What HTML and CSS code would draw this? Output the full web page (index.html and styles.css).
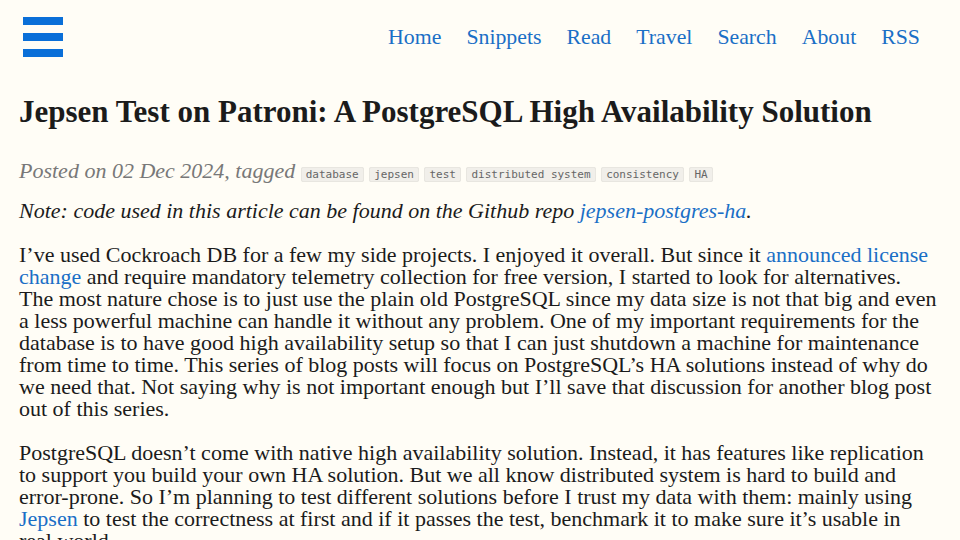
FILE: index.html
```html
<!DOCTYPE html>
<html lang="en">
<head>
  <meta charset="UTF-8">
  <meta name="viewport" content="width=device-width, initial-scale=1.0">
  <title>Jepsen Test on Patroni: A PostgreSQL High Availability Solution</title>
  <link rel="stylesheet" href="styles.css">
</head>
<body>
  <header class="header">
    <a class="menu" href="#" aria-label="Menu">
      <span></span><span></span><span></span>
    </a>
    <nav class="nav">
      <a href="/">Home</a>
      <a href="/snippets">Snippets</a>
      <a href="/read">Read</a>
      <a href="/travel">Travel</a>
      <a href="/search">Search</a>
      <a href="/about">About</a>
      <a href="/rss.xml">RSS</a>
    </nav>
  </header>

  <main class="post">
    <h1>Jepsen Test on Patroni: A PostgreSQL High Availability Solution</h1>
    <p class="meta">Posted on 02 Dec 2024, tagged
      <code>database</code>
      <code>jepsen</code>
      <code>test</code>
      <code>distributed system</code>
      <code>consistency</code>
      <code>HA</code>
    </p>

    <p><em>Note: code used in this article can be found on the Github repo <a href="#">jepsen-postgres-ha</a>.</em></p>

    <p>I’ve used Cockroach DB for a few my side projects. I enjoyed it overall. But since it <a href="#">announced license change</a> and require mandatory telemetry collection for free version, I started to look for alternatives. The most nature chose is to just use the plain old PostgreSQL since my data size is not that big and even a less powerful machine can handle it without any problem. One of my important requirements for the database is to have good high availability setup so that I can just shutdown a machine for maintenance from time to time. This series of blog posts will focus on PostgreSQL’s HA solutions instead of why do we need that. Not saying why is not important enough but I’ll save that discussion for another blog post out of this series.</p>

    <p>PostgreSQL doesn’t come with native high availability solution. Instead, it has features like replication to support you build your own HA solution. But we all know distributed system is hard to build and error-prone. So I’m planning to test different solutions before I trust my data with them: mainly using <a href="#">Jepsen</a> to test the correctness at first and if it passes the test, benchmark it to make sure it’s usable in real world.</p>
  </main>
</body>
</html>
```

FILE: styles.css
```css
body {
  margin: 0;
  background: #fffdf6;
  color: #1b1b1b;
  font-family: "Liberation Serif", Georgia, serif;
  font-size: 22px;
  line-height: 22px;
}
a {
  color: #1a6fc6;
  text-decoration: none;
}

.header {
  display: flex;
  justify-content: space-between;
  align-items: center;
  padding: 17px 40px 0 23px;
}
.menu {
  display: flex;
  flex-direction: column;
  gap: 8px;
  width: 40px;
}
.menu span {
  display: block;
  height: 8px;
  background: #0a6fd8;
}
.nav {
  display: flex;
  gap: 25px;
  font-size: 21.8px;
}

.post {
  padding: 0 22.5px 0 19px;
}
.post h1 {
  font-size: 31px;
  line-height: 36px;
  margin: 37px 0 30px;
}
.post p {
  margin: 0 0 22px;
}
.post .meta {
  color: #787878;
  font-style: italic;
  margin-bottom: 18px;
}
.meta code {
  font-family: "DejaVu Sans Mono", monospace;
  font-style: normal;
  font-size: 11px;
  line-height: 13px;
  color: #666;
  background: #f1efea;
  border: 1px solid #e8e6e0;
  border-radius: 2px;
  padding: 0 4px;
}
```
